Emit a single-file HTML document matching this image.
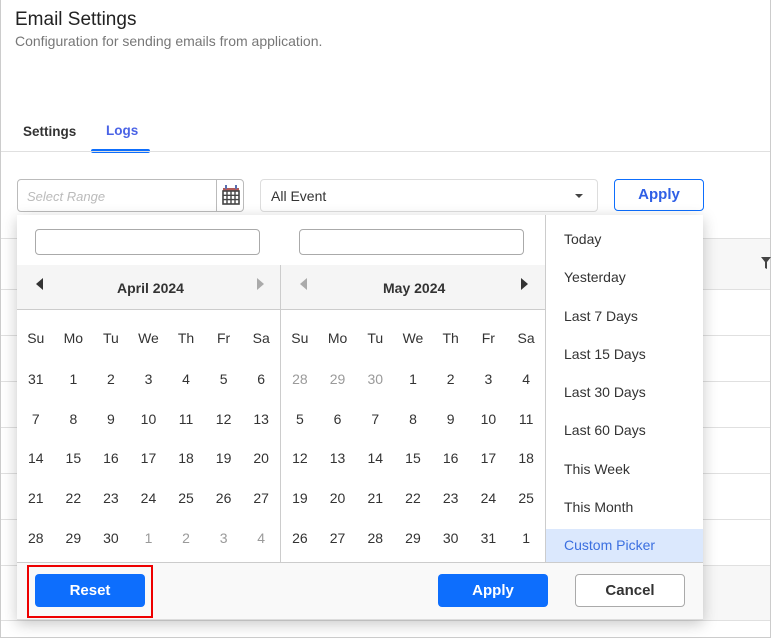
<!DOCTYPE html>
<html><head><meta charset="utf-8"><style>
*{box-sizing:border-box;margin:0;padding:0}
body{width:772px;height:639px;position:relative;background:#fff;font-family:"Liberation Sans",sans-serif;color:#333;overflow:hidden}
.frame{position:absolute;left:0;top:0;width:771px;height:638px;border:1px solid #ccc;border-top:none}
.abs{position:absolute}
.hl{position:absolute;left:1px;right:2px;height:1px;background:#e0e0e0}
table{border-collapse:collapse;position:absolute;table-layout:fixed}
td{text-align:center;font-size:14px;height:39.7px;color:#333;padding:0}
td.g{color:#9a9a9a}
tr.h td{height:43px;font-size:14px}
.preset{position:absolute;left:564px;font-size:14px;color:#333}
.btn{position:absolute;border-radius:4px;font-weight:bold;font-size:15px;text-align:center}
</style></head><body>
<div class="frame"></div>
<div class="abs" style="left:15px;top:9px;font-size:19px;color:#222">Email Settings</div>
<div class="abs" style="left:15px;top:33px;font-size:14px;color:#777">Configuration for sending emails from application.</div>
<div class="abs" style="left:23px;top:124px;font-size:13.5px;font-weight:bold;color:#333">Settings</div>
<div class="abs" style="left:106px;top:123px;font-size:13.5px;font-weight:bold;color:#4a63e6">Logs</div>
<div class="abs" style="left:91px;top:149px;width:59px;height:4px;border-radius:2px;background:#0d6efd"></div>
<div class="hl" style="top:151px"></div>

<div class="abs" style="left:17px;top:179px;width:227px;height:33px;border:1px solid #bbb;border-radius:4px"></div>
<div class="abs" style="left:216px;top:180px;width:1px;height:31px;background:#bbb"></div>
<div class="abs" style="left:27px;top:189px;font-size:13px;font-style:italic;color:#bbb">Select Range</div>
<svg class="abs" style="left:221px;top:184px" width="20" height="22" viewBox="0 0 20 22">
<rect x="2" y="4" width="16" height="3" fill="#b05a5a"/><rect x="4" y="1" width="2" height="4" fill="#5a6fb0"/><rect x="14" y="1" width="2" height="4" fill="#5a6fb0"/>
<rect x="2" y="7" width="16" height="13" fill="none" stroke="#444" stroke-width="1.6"/>
<path d="M2 11.3H18M2 15.6H18M6 7V20M10 7V20M14 7V20" stroke="#444" stroke-width="1.4"/></svg>
<div class="abs" style="left:260px;top:179px;width:338px;height:33px;border:1px solid #ddd;border-radius:4px"></div>
<div class="abs" style="left:271px;top:188px;font-size:14px;color:#333">All Event</div>
<div class="abs" style="left:575px;top:194px;width:0;height:0;border-left:4px solid transparent;border-right:4px solid transparent;border-top:4px solid #444"></div>
<div class="abs" style="left:614px;top:179px;width:90px;height:32px;border:1.5px solid #0d6efd;border-radius:4px;color:#2f5fe6;font-weight:bold;font-size:15px;text-align:center;line-height:29px">Apply</div>

<div class="abs" style="left:700px;top:238px;width:70px;height:52px;background:#f7f7f7"></div>
<div class="hl" style="top:238px"></div>
<div class="hl" style="top:289px"></div>
<div class="hl" style="top:335px"></div>
<div class="hl" style="top:381px"></div>
<div class="hl" style="top:427px"></div>
<div class="hl" style="top:473px"></div>
<div class="hl" style="top:519px"></div>
<div class="hl" style="top:565px"></div>
<div class="abs" style="left:700px;top:566px;width:70px;height:54px;background:#f7f7f7"></div>
<div class="hl" style="top:620px"></div>
<svg class="abs" style="left:761px;top:257px" width="10" height="12"><path d="M0 0H10L6 5V12L4 11V5Z" fill="#444"/></svg>

<div class="abs" style="left:17px;top:215px;width:686px;height:405px;background:#fff;box-shadow:0 4px 14px rgba(0,0,0,.22)"></div>
<div class="abs" style="left:35px;top:229px;width:225px;height:26px;border:1px solid #aaa;border-radius:4px"></div>
<div class="abs" style="left:299px;top:229px;width:225px;height:26px;border:1px solid #aaa;border-radius:4px"></div>
<div class="abs" style="left:17px;top:265px;width:528px;height:45px;background:#f5f5f5;border-bottom:1px solid #ccc"></div>
<div class="abs" style="left:280px;top:265px;width:1px;height:297px;background:#ccc"></div>
<div class="abs" style="left:545px;top:215px;width:1px;height:347px;background:#ccc"></div>
<div class="abs" style="left:117px;top:280px;font-size:14px;font-weight:bold;color:#333">April 2024</div>
<div class="abs" style="left:383px;top:280px;font-size:14px;font-weight:bold;color:#333">May 2024</div>
<div class="abs" style="left:36px;top:278px;border-top:6px solid transparent;border-bottom:6px solid transparent;border-right:7px solid #333"></div>
<div class="abs" style="left:257px;top:278px;border-top:6px solid transparent;border-bottom:6px solid transparent;border-left:7px solid #aaa"></div>
<div class="abs" style="left:300px;top:278px;border-top:6px solid transparent;border-bottom:6px solid transparent;border-right:7px solid #aaa"></div>
<div class="abs" style="left:521px;top:278px;border-top:6px solid transparent;border-bottom:6px solid transparent;border-left:7px solid #333"></div>

<table style="left:17px;top:316px;width:263px">
<tr class="h"><td>Su</td><td>Mo</td><td>Tu</td><td>We</td><td>Th</td><td>Fr</td><td>Sa</td></tr>
<tr><td>31</td><td>1</td><td>2</td><td>3</td><td>4</td><td>5</td><td>6</td></tr>
<tr><td>7</td><td>8</td><td>9</td><td>10</td><td>11</td><td>12</td><td>13</td></tr>
<tr><td>14</td><td>15</td><td>16</td><td>17</td><td>18</td><td>19</td><td>20</td></tr>
<tr><td>21</td><td>22</td><td>23</td><td>24</td><td>25</td><td>26</td><td>27</td></tr>
<tr><td>28</td><td>29</td><td>30</td><td class="g">1</td><td class="g">2</td><td class="g">3</td><td class="g">4</td></tr>
</table>
<table style="left:281px;top:316px;width:264px">
<tr class="h"><td>Su</td><td>Mo</td><td>Tu</td><td>We</td><td>Th</td><td>Fr</td><td>Sa</td></tr>
<tr><td class="g">28</td><td class="g">29</td><td class="g">30</td><td>1</td><td>2</td><td>3</td><td>4</td></tr>
<tr><td>5</td><td>6</td><td>7</td><td>8</td><td>9</td><td>10</td><td>11</td></tr>
<tr><td>12</td><td>13</td><td>14</td><td>15</td><td>16</td><td>17</td><td>18</td></tr>
<tr><td>19</td><td>20</td><td>21</td><td>22</td><td>23</td><td>24</td><td>25</td></tr>
<tr><td>26</td><td>27</td><td>28</td><td>29</td><td>30</td><td>31</td><td>1</td></tr>
</table>

<div class="preset" style="top:231px">Today</div>
<div class="preset" style="top:269px">Yesterday</div>
<div class="preset" style="top:308px">Last 7 Days</div>
<div class="preset" style="top:346px">Last 15 Days</div>
<div class="preset" style="top:384px">Last 30 Days</div>
<div class="preset" style="top:422px">Last 60 Days</div>
<div class="preset" style="top:461px">This Week</div>
<div class="preset" style="top:499px">This Month</div>
<div class="abs" style="left:546px;top:529px;width:157px;height:33px;background:#dbe8fd"></div>
<div class="preset" style="top:537px;color:#3b6fe0">Custom Picker</div>

<div class="abs" style="left:17px;top:562px;width:686px;height:58px;background:#f9f9f9;border-top:1px solid #ccc;border-bottom:1px solid #ddd"></div>
<div class="abs" style="left:27px;top:565px;width:126px;height:53px;border:2px solid #e00"></div>
<div class="btn" style="left:35px;top:574px;width:110px;height:33px;background:#0d6efd;color:#fff;line-height:33px">Reset</div>
<div class="btn" style="left:438px;top:574px;width:110px;height:33px;background:#0d6efd;color:#fff;line-height:33px">Apply</div>
<div class="btn" style="left:575px;top:574px;width:110px;height:33px;background:#fff;border:1px solid #aaa;color:#333;line-height:31px">Cancel</div>
</body></html>
